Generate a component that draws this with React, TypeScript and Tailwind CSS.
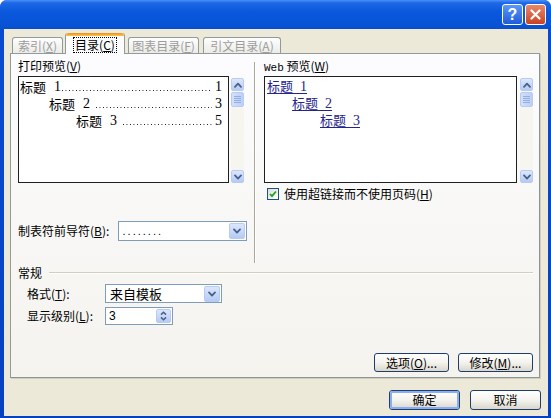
import React from "react";

const CJK = "font-['Noto_Sans_CJK_SC','Noto_Sans',sans-serif]";
const SERIF = "font-['Liberation_Serif','Noto_Sans_CJK_SC',serif]";

function Chevron({ dir }: { dir: "up" | "down" }) {
  return (
    <svg width="8" height="6" viewBox="0 0 8 6">
      <path
        d={dir === "up" ? "M1 4.8 L4 1.6 L7 4.8" : "M1 1.4 L4 4.6 L7 1.4"}
        fill="none"
        stroke="#4D6185"
        strokeWidth="1.8"
        strokeLinecap="round"
        strokeLinejoin="round"
      />
    </svg>
  );
}

function ScrollBtn({ dir }: { dir: "up" | "down" }) {
  return (
    <div className="flex h-[13px] w-[13px] items-center justify-center rounded-[2px] border border-[#B9CBF2] bg-gradient-to-b from-[#DCE7FD] to-[#B4CAF6]">
      <Chevron dir={dir} />
    </div>
  );
}

function ScrollBar() {
  return (
    <div className="flex w-[13px] flex-col">
      <ScrollBtn dir="up" />
      <div className="mt-[1px] flex h-[15px] w-[13px] flex-col items-center justify-center gap-[1px] rounded-[2px] border border-[#B9CBF2] bg-gradient-to-r from-[#D3E0FC] to-[#BCCFF6]">
        <div className="h-[1px] w-[7px] bg-[#94ACDE]" />
        <div className="h-[1px] w-[7px] bg-[#94ACDE]" />
        <div className="h-[1px] w-[7px] bg-[#94ACDE]" />
        <div className="h-[1px] w-[7px] bg-[#94ACDE]" />
      </div>
      <div className="flex-1 bg-[#F6F5F0]" />
      <ScrollBtn dir="down" />
    </div>
  );
}

function ComboBtn({ h = 16 }: { h?: number }) {
  return (
    <div
      className="flex w-[16px] items-center justify-center rounded-[2px] border border-[#B9CBF2] bg-gradient-to-b from-[#DCE7FD] to-[#B4CAF6]"
      style={{ height: h }}
    >
      <Chevron dir="down" />
    </div>
  );
}

function U({ c }: { c: string }) {
  return <span className="underline">{c}</span>;
}

function XPButton({
  children,
  w,
  h,
  def,
}: {
  children: React.ReactNode;
  w: number;
  h: number;
  def?: boolean;
}) {
  return (
    <div
      className="flex items-center justify-center rounded-[3px] border border-[#1F3E6E] bg-gradient-to-b from-[#FFFFFF] via-[#F4F3EE] to-[#DAD6CB]"
      style={{ width: w, height: h }}
    >
      <div
        className={
          "flex h-full w-full items-center justify-center rounded-[2px] text-[12px] text-black " +
          (def ? "border-2 border-[#8AAEF0]" : "")
        }
      >
        {children}
      </div>
    </div>
  );
}

function PrintRow({
  indent,
  num,
  page,
  space,
}: {
  indent: number;
  num: string;
  page: string;
  space: boolean;
}) {
  return (
    <div className={"flex h-[17px] items-center pr-[6px] text-[14px] leading-[17px] text-black " + SERIF} style={{ paddingLeft: indent }}>
      <span className={CJK + " text-[13px]"}>标题</span>
      <span className="ml-[8px]">{num}</span>
      {space && <span className="w-[5px]" />}
      <span className="mb-[4px] ml-[1px] h-[1px] flex-1 self-end bg-[linear-gradient(to_right,#111_1px,transparent_1px)] bg-[length:3.5px_1px] bg-repeat-x" />
      <span className="ml-[3px]">{page}</span>
    </div>
  );
}

function WebRow({ indent, num }: { indent: number; num: string }) {
  return (
    <div className="flex h-[17px] items-center text-[#24248E]" style={{ paddingLeft: indent }}>
      <span className="underline decoration-[#24248E] underline-offset-2">
        <span className={CJK + " text-[13px]"}>标题</span>
        <span className={SERIF + " text-[14px]"}>{"\u00a0\u00a0" + num}</span>
      </span>
    </div>
  );
}

export default function App() {
  return (
    <div className="h-[418px] w-[551px] bg-white">
      <div
        className={
          "flex h-[418px] w-[551px] flex-col rounded-t-[7px] bg-[linear-gradient(to_bottom,#0A4BD0,#0642C0)] " +
          CJK
        }
      >
        {/* Title bar */}
        <div className="flex h-[29px] items-center justify-end gap-[2px] rounded-t-[7px] bg-[linear-gradient(to_bottom,#4A90F8_0%,#1E68E6_10%,#0B58DC_40%,#0754D8_80%,#0A4ECB_100%)] pr-[5px]">
          <div className="flex h-[21px] w-[21px] items-center justify-center rounded-[3px] border border-white bg-gradient-to-b from-[#5C97F8] to-[#1F5AD9] font-['Liberation_Sans',sans-serif] text-[16px] font-bold leading-none text-white">
            ?
          </div>
          <div className="flex h-[21px] w-[21px] items-center justify-center rounded-[3px] border border-white bg-gradient-to-b from-[#E8876B] to-[#C8421F]">
            <svg width="11" height="11" viewBox="0 0 11 11">
              <path d="M1.5 1.5 L9.5 9.5 M9.5 1.5 L1.5 9.5" stroke="white" strokeWidth="2.2" strokeLinecap="round" />
            </svg>
          </div>
        </div>

        {/* Body */}
        <div className="mb-[2px] ml-[4px] mr-[3px] flex flex-1 flex-col bg-[#ECE9D8] pt-[4px]">
          {/* Tabs */}
          <div className="flex h-[20px] items-end pl-[8px] text-[12px] leading-none">
            <div className="flex h-[16px] w-[51px] items-center justify-center rounded-t-[3px] border border-b-0 border-[#919B9C] bg-gradient-to-b from-[#FEFEFE] to-[#ECEBE6] text-[#9C9C9C]">
              索引(<U c="X" />)
            </div>
            <div className="relative z-10 mb-[-1px] ml-[2px] flex h-[21px] w-[60px] flex-col rounded-t-[3px] border-x border-[#919B9C] bg-[#FCFCFE]">
              <div className="h-[3px] rounded-t-[3px] bg-gradient-to-b from-[#E68B2C] to-[#FFC73C]" />
              <div className="flex flex-1 items-center justify-center">
                <span className="border border-dotted border-black px-[1px] py-[1px] text-black">
                  目录(<U c="C" />)
                </span>
              </div>
            </div>
            <div className="ml-[3px] flex h-[16px] w-[71px] items-center justify-center rounded-t-[3px] border border-b-0 border-[#919B9C] bg-gradient-to-b from-[#FEFEFE] to-[#ECEBE6] text-[#9C9C9C]">
              图表目录(<U c="F" />)
            </div>
            <div className="ml-[4px] flex h-[16px] w-[78px] items-center justify-center rounded-t-[3px] border border-b-0 border-[#919B9C] bg-gradient-to-b from-[#FEFEFE] to-[#ECEBE6] text-[#9C9C9C]">
              引文目录(<U c="A" />)
            </div>
          </div>

          {/* Panel */}
          <div className="ml-[6px] mr-[8px] flex h-[325px] flex-col border border-[#919B9C] border-b-[#8B9394] border-r-[#8B9394] bg-gradient-to-b from-[#FCFCFE] to-[#F4F3EE] pl-[7px] pr-[6px] text-[12px] text-black shadow-[1px_1px_0_#D0CEC0]">
            {/* top section */}
            <div className="flex h-[209px]">
              {/* left column */}
              <div className="flex w-[229px] flex-col">
                <div className="mt-[4px] h-[16px] leading-[16px]">
                  打印预览(<U c="V" />)
                </div>
                <div className="mt-[2px] flex h-[107px]">
                  <div className="flex w-[211px] flex-col border border-[#202020] bg-white pt-[1px]">
                    <PrintRow indent={1} num="1" page="1" space={false} />
                    <PrintRow indent={30} num="2" page="3" space />
                    <PrintRow indent={57} num="3" page="5" space />
                  </div>
                  <div className="ml-[2px] mt-[2px] flex">
                    <ScrollBar />
                  </div>
                </div>
                <div className="mt-[38px] flex h-[20px] items-center">
                  <div className="w-[100px] leading-none">
                    制表符前导符(<U c="B" />):
                  </div>
                  <div className="flex h-[20px] w-[130px] items-center justify-between border border-[#7F9DB9] bg-white pl-[4px] pr-[1px]">
                    <span className="font-['Liberation_Sans',sans-serif] text-[11px] tracking-[2px]">........</span>
                    <ComboBtn />
                  </div>
                </div>
              </div>

              {/* separator */}
              <div className="ml-[7px] mt-[8px] flex h-[201px] w-[2px]">
                <div className="w-[1px] bg-[#ACA899]" />
                <div className="w-[1px] bg-white" />
              </div>

              {/* right column */}
              <div className="ml-[8px] flex w-[269px] flex-col">
                <div className="mt-[4px] h-[16px] leading-[16px]">
                  <span className="font-['Liberation_Mono',monospace] text-[11px]">Web</span> 预览(<U c="W" />)
                </div>
                <div className="mt-[2px] flex h-[107px]">
                  <div className="flex w-[253px] flex-col border border-[#202020] bg-white pl-[2px] pt-[1px]">
                    <WebRow indent={0} num="1" />
                    <WebRow indent={25} num="2" />
                    <WebRow indent={53} num="3" />
                  </div>
                  <div className="ml-[3px] mt-[2px] flex">
                    <ScrollBar />
                  </div>
                </div>
                <div className="mt-[4px] flex h-[13px] items-center pl-[3px]">
                  <div className="flex h-[12px] w-[12px] items-center justify-center border border-[#1C5180] bg-gradient-to-br from-[#DCDCD7] to-white">
                    <svg width="8" height="8" viewBox="0 0 8 8">
                      <path d="M1 4 L3 6.2 L7 1.5" fill="none" stroke="#21A121" strokeWidth="1.8" />
                    </svg>
                  </div>
                  <span className="ml-[5px] leading-none">
                    使用超链接而不使用页码(<U c="H" />)
                  </span>
                </div>
              </div>
            </div>

            {/* General group */}
            <div className="mt-[2px] flex h-[16px] items-center">
              <span className="leading-none">常规</span>
              <div className="ml-[7px] flex flex-1 flex-col">
                <div className="h-[1px] bg-[#D0D0BF]" />
                <div className="h-[1px] bg-white" />
              </div>
            </div>
            <div className="mt-[3px] flex h-[19px] items-center pl-[9px]">
              <div className="w-[78px] leading-none">
                格式(<U c="T" />):
              </div>
              <div className="flex h-[19px] w-[117px] items-center justify-between border border-[#7F9DB9] bg-white pl-[4px] pr-[1px]">
                <span className="text-[13px] leading-none">来自模板</span>
                <ComboBtn />
              </div>
            </div>
            <div className="mt-[4px] flex h-[18px] items-center pl-[9px]">
              <div className="w-[78px] leading-none">
                显示级别(<U c="L" />):
              </div>
              <div className="flex h-[18px] w-[68px] items-center justify-between border border-[#7F9DB9] bg-white pl-[3px] pr-[1px]">
                <span className="font-['Liberation_Sans',sans-serif] text-[12px] leading-none">3</span>
                <div className="flex h-[14px] w-[15px] flex-col items-center justify-center rounded-[2px] border border-[#B9CBF2] bg-gradient-to-b from-[#DCE7FD] to-[#B4CAF6]">
                  <svg width="7" height="10" viewBox="0 0 7 10">
                    <path d="M1 3.6 L3.5 1.2 L6 3.6 M1 6.4 L3.5 8.8 L6 6.4" fill="none" stroke="#4D6185" strokeWidth="1.5" />
                  </svg>
                </div>
              </div>
            </div>

            <div className="flex-1" />
            <div className="mb-[5px] flex justify-end gap-[9px]">
              <XPButton w={75} h={19}>
                选项(<U c="O" />)...
              </XPButton>
              <XPButton w={75} h={19}>
                修改(<U c="M" />)...
              </XPButton>
            </div>
          </div>

          {/* Bottom buttons */}
          <div className="mt-[12px] flex justify-end gap-[10px] pr-[7px]">
            <XPButton w={71} h={20} def>
              确定
            </XPButton>
            <XPButton w={71} h={20}>
              取消
            </XPButton>
          </div>
        </div>
      </div>
    </div>
  );
}
